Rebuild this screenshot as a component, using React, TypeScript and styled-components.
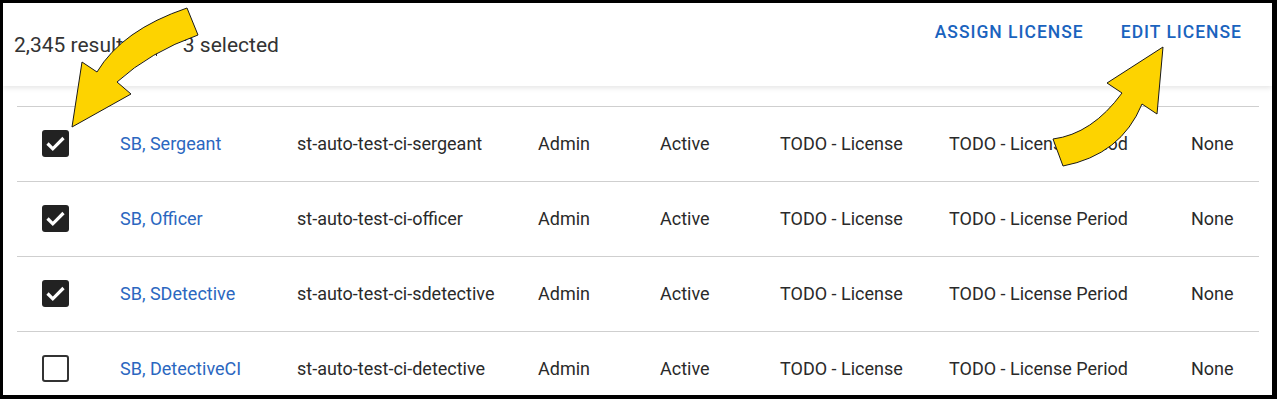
import React from "react";
import styled, { createGlobalStyle } from "styled-components";

interface UserRow {
  name: string;
  username: string;
  role: string;
  status: string;
  license: string;
  period: string;
  extra: string;
  checked: boolean;
}

const rows: UserRow[] = [
  { name: "SB, Sergeant", username: "st-auto-test-ci-sergeant", role: "Admin", status: "Active", license: "TODO - License", period: "TODO - License Period", extra: "None", checked: true },
  { name: "SB, Officer", username: "st-auto-test-ci-officer", role: "Admin", status: "Active", license: "TODO - License", period: "TODO - License Period", extra: "None", checked: true },
  { name: "SB, SDetective", username: "st-auto-test-ci-sdetective", role: "Admin", status: "Active", license: "TODO - License", period: "TODO - License Period", extra: "None", checked: true },
  { name: "SB, DetectiveCI", username: "st-auto-test-ci-detective", role: "Admin", status: "Active", license: "TODO - License", period: "TODO - License Period", extra: "None", checked: false },
];

const GlobalStyle = createGlobalStyle`
  html, body {
    margin: 0;
    padding: 0;
    background: #ffffff;
  }
  body {
    font-family: Roboto, "Liberation Sans", Arial, sans-serif;
    color: #212121;
  }
`;

const Checkbox = ({ checked }: { checked: boolean }) => (
  <Box checked={checked}>
    {checked && (
      <svg width="27" height="27" viewBox="0 0 27 27">
        <path d="M5.5 13.5 L10.8 18.8 L21.5 8" fill="none" stroke="#fff" strokeWidth="3.2" />
      </svg>
    )}
  </Box>
);

// yellow callout arrows drawn over the page
const Arrows = () => (
  <Overlay width="1277" height="399" viewBox="0 0 1277 399">
    <path
      d="M187 8 L198 35 Q150 52 117 82 L131 94 L72 127 L82 62 L97 72 Q122 30 187 8 Z"
      fill="#fdd300"
      stroke="#1a1a1a"
      strokeWidth="1"
    />
    <path
      d="M1053 139 Q1092 134 1122 93 L1107 83 L1163 47 L1157 114 L1142 104 Q1121 155 1063 166 Z"
      fill="#fdd300"
      stroke="#1a1a1a"
      strokeWidth="1"
    />
  </Overlay>
);

const App = () => {
  return (
    <>
      <GlobalStyle />
      <Frame>
        <Header>
          <Summary>
            <span>2,345 results</span>
            <Divider />
            <span>3 selected</span>
          </Summary>
          <Actions>
            <ActionButton>ASSIGN LICENSE</ActionButton>
            <ActionButton>EDIT LICENSE</ActionButton>
          </Actions>
        </Header>
        <Table>
          {rows.map((r) => (
            <Row key={r.username}>
              <CheckCell>
                <Checkbox checked={r.checked} />
              </CheckCell>
              <NameLink>{r.name}</NameLink>
              <Cell>{r.username}</Cell>
              <Cell>{r.role}</Cell>
              <Cell>{r.status}</Cell>
              <Cell>{r.license}</Cell>
              <Cell>{r.period}</Cell>
              <Cell>{r.extra}</Cell>
            </Row>
          ))}
        </Table>
        <Arrows />
      </Frame>
    </>
  );
};

export default App;

const Frame = styled.div`
  position: relative;
  box-sizing: border-box;
  width: 1277px;
  height: 399px;
  border-style: solid;
  border-color: #000;
  border-width: 3px 5px 4px 3px;
  overflow: hidden;
  background: #fff;
`;

const Header = styled.div`
  height: 83px;
  display: flex;
  justify-content: space-between;
  align-items: flex-start;
  box-shadow: 0 2px 5px rgba(0, 0, 0, 0.1);
  position: relative;
  z-index: 1;
`;

const Summary = styled.div`
  display: flex;
  align-items: center;
  padding: 30px 0 0 11px;
  font-size: 21px;
  color: #333;
`;

const Divider = styled.span`
  display: inline-block;
  width: 1px;
  height: 11px;
  background: #333;
  margin: 10px 26px 0 22px;
`;

const Actions = styled.div`
  display: flex;
  gap: 37px;
  padding: 17px 30px 0 0;
`;

const ActionButton = styled.button`
  border: none;
  background: none;
  padding: 0;
  font-family: Roboto, "Liberation Sans", Arial, sans-serif;
  font-weight: 500;
  font-size: 17.5px;
  letter-spacing: 1px;
  color: #1a63be;
  cursor: pointer;
  line-height: 24px;
`;

const Table = styled.div`
  margin: 20px 13px 0 14px;
`;

const Row = styled.div`
  display: grid;
  grid-template-columns: 103px 177px 241px 122px 120px 169px 242px 1fr;
  align-items: center;
  height: 75px;
  padding-bottom: 2px;
  border-top: 1px solid #cfcfcf;
  box-sizing: border-box;
`;

const CheckCell = styled.div`
  padding-left: 25px;
  display: flex;
  align-items: center;
`;

const Box = styled.div<{ checked: boolean }>`
  box-sizing: border-box;
  width: 27px;
  height: 27px;
  border-radius: 3px;
  display: flex;
  align-items: center;
  justify-content: center;
  background: ${(p) => (p.checked ? "#222" : "#fff")};
  border: ${(p) => (p.checked ? "none" : "2.5px solid #333")};
`;

const Cell = styled.div`
  font-size: 18px;
  color: #2a2a2a;
  white-space: nowrap;
`;

const NameLink = styled(Cell)`
  color: #2b67c0;
`;

const Overlay = styled.svg`
  position: absolute;
  left: -3px;
  top: -3px;
  z-index: 2;
  pointer-events: none;
`;
